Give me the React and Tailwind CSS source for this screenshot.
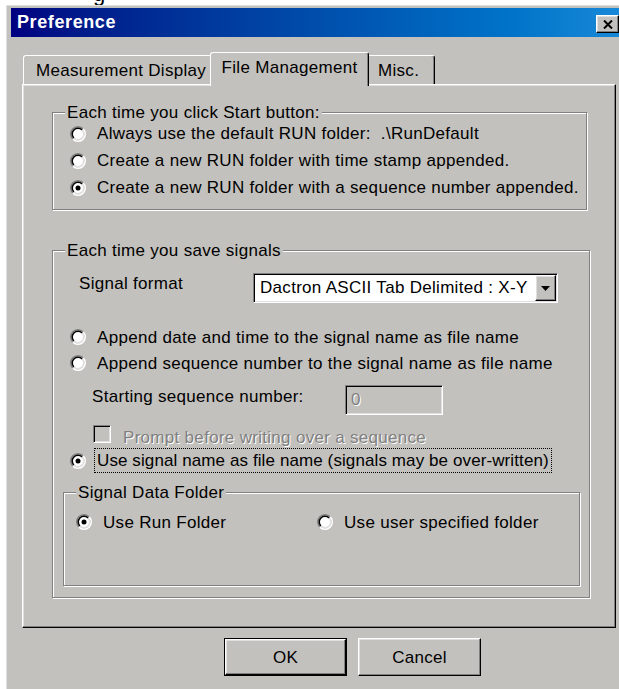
import React from "react";

// classic 3D edges
const raised =
  "border border-t-white border-l-white border-r-black border-b-black shadow-[inset_-1px_-1px_0_#808080,inset_1px_1px_0_#dfdfdf]";
const sunken =
  "border border-t-[#808080] border-l-[#808080] border-r-white border-b-white shadow-[inset_1px_1px_0_#000,inset_-1px_-1px_0_#dfdfdf]";
const etched = "border border-[#808080] shadow-[inset_1px_1px_0_#fff,1px_1px_0_#fff]";
const disabledText = "text-[#808080] [text-shadow:1px_1px_0_#fff]";

function Radio({ checked }) {
  return (
    <svg width="16" height="16" viewBox="0 0 16 16" className="shrink-0">
      <circle cx="8" cy="8" r="6" fill="#fff" />
      <path d="M13.13 2.87 A7.25 7.25 0 0 0 2.87 13.13" fill="none" stroke="#808080" strokeWidth="1.5" />
      <path d="M2.87 13.13 A7.25 7.25 0 0 0 13.13 2.87" fill="none" stroke="#fff" strokeWidth="1.5" />
      <path d="M12.07 3.93 A5.75 5.75 0 0 0 3.93 12.07" fill="none" stroke="#000" strokeWidth="1.5" />
      <path d="M3.93 12.07 A5.75 5.75 0 0 0 12.07 3.93" fill="none" stroke="#dfdfdf" strokeWidth="1.5" />
      {checked && <circle cx="8" cy="8" r="2.5" fill="#000" />}
    </svg>
  );
}

function Option({ checked, focused, className = "", children }) {
  return (
    <div className={`flex items-center gap-[8px] ${className}`}>
      <Radio checked={checked} />
      <span
        className={`border border-dotted px-[2px] leading-[23px] whitespace-nowrap ${
          focused ? "border-black tracking-[0.1px]" : "border-transparent"
        }`}
      >
        {children}
      </span>
    </div>
  );
}

function Group({ title, className = "", children }) {
  return (
    <div className={`${etched} ${className}`}>
      <div className="-mt-[10px] ml-[12px] h-[19px] w-fit bg-[#c3c1bd] px-[2px] leading-[19px]">{title}</div>
      {children}
    </div>
  );
}

function Button({ isDefault, children }) {
  return (
    <div className={`h-[38px] w-[123px] ${isDefault ? "border border-black" : ""}`}>
      <button className={`flex h-full w-full items-center justify-center ${raised} bg-[#c3c1bd] leading-[19px]`}>
        {children}
      </button>
    </div>
  );
}

export default function App() {
  return (
    <div className="h-[689px] w-[619px] overflow-hidden bg-white font-['Liberation_Sans',Arial,sans-serif] text-[17px] tracking-[0.3px] text-black">
      <div className="h-[5px] overflow-hidden pl-[93px]">
        <div className="-mt-[17px] text-[22px] leading-[22px]">g</div>
      </div>

      <div className="ml-[6px] h-[700px] w-[624px] border-l border-t border-[#dfdfdf] bg-[#c3c1bd] pl-[4px] pt-[2px]">
        {/* caption */}
        <div className="flex h-[29px] w-[610px] items-start justify-between bg-linear-to-r from-[#000080] to-[#1889d8] pl-[6px] pr-[2px]">
          <span className="mt-[4px] text-[18px] font-bold leading-[21px] tracking-[0.6px] text-white">Preference</span>
          <button className={`mt-[7px] flex h-[18px] w-[23px] items-center justify-center bg-[#c3c1bd] ${raised}`}>
            <svg width="10" height="9" viewBox="0 0 10 9">
              <path d="M1 0.5 L9 8.5 M9 0.5 L1 8.5" stroke="#000" strokeWidth="2" />
            </svg>
          </button>
        </div>

        {/* tabs */}
        <div className="ml-[12px] mt-[15px] flex items-end">
          <div className="mb-[2px] flex h-[29px] w-[189px] items-center rounded-t-[3px] border-l border-t border-r border-l-white border-t-white border-r-black pl-[12px] leading-[19px] whitespace-nowrap">
            Measurement Display
          </div>
          <div className="relative z-10 -ml-[2px] flex h-[34px] w-[159px] items-start justify-center rounded-t-[3px] border-l border-t border-r border-l-white border-t-white border-r-black bg-[#c3c1bd] pt-[5px] leading-[19px] whitespace-nowrap shadow-[inset_-1px_0_0_#808080]">
            File Management
          </div>
          <div className="mb-[2px] -ml-[2px] flex h-[29px] w-[68px] items-center rounded-t-[3px] border-l border-t border-r border-l-white border-t-white border-r-black pl-[10px] leading-[19px] shadow-[inset_-1px_0_0_#808080]">
            Misc.
          </div>
        </div>

        {/* tab page */}
        <div className="relative -mt-[2px] ml-[11px] h-[544px] w-[594px] border border-t-white border-l-white border-r-black border-b-black bg-[#c3c1bd] pt-[27px] shadow-[inset_-1px_-1px_0_#808080,inset_1px_1px_0_#dfdfdf]">
          <Group title="Each time you click Start button:" className="ml-[29px] h-[98px] w-[535px]">
            <div className="-mt-[2px] flex flex-col pl-[17px]">
              <Option className="h-[27px]">{"Always use the default RUN folder:\u00a0 .\\RunDefault"}</Option>
              <Option className="h-[27px]">Create a new RUN folder with time stamp appended.</Option>
              <Option className="h-[27px]" checked>
                Create a new RUN folder with a sequence number appended.
              </Option>
            </div>
          </Group>

          <Group title="Each time you save signals" className="ml-[29px] mt-[40px] h-[348px] w-[538px]">
            <div className="mt-[13px] flex h-[30px] pl-[26px]">
              <div className="w-[174px] pt-[1px] leading-[19px]">Signal format</div>
              <div className={`flex h-[30px] w-[305px] bg-white p-[1px] ${sunken}`}>
                <div className="flex-1 overflow-hidden pl-[5px] leading-[26px] whitespace-nowrap">
                  Dactron ASCII Tab Delimited : X-Y
                </div>
                <div className={`flex h-[26px] w-[21px] shrink-0 items-center justify-center bg-[#c3c1bd] ${raised}`}>
                  <svg width="9" height="5" viewBox="0 0 9 5">
                    <path d="M0 0 H9 L4.5 5 Z" fill="#000" />
                  </svg>
                </div>
              </div>
            </div>

            <div className="mt-[21px] pl-[17px]">
              <Option className="h-[26px]">Append date and time to the signal name as file name</Option>
              <Option className="h-[26px]">Append sequence number to the signal name as file name</Option>
            </div>

            <div className="mt-[9px] flex h-[30px] pl-[39px]">
              <div className="w-[253px] pt-[2px] leading-[19px] whitespace-nowrap">Starting sequence number:</div>
              <div className={`h-[30px] w-[98px] p-[1px] pl-[5px] leading-[26px] ${sunken} ${disabledText}`}>0</div>
            </div>

            <div className="mt-[10px] flex h-[18px] items-start gap-[12px] pl-[40px]">
              <div className={`h-[18px] w-[18px] shrink-0 ${sunken}`} />
              <span className={`pt-[3px] leading-[19px] whitespace-nowrap ${disabledText}`}>
                Prompt before writing over a sequence
              </span>
            </div>

            <div className="mt-[5px] pl-[17px]">
              <Option checked focused>
                Use signal name as file name (signals may be over-written)
              </Option>
            </div>

            <Group title="Signal Data Folder" className="ml-[10px] mt-[19px] h-[94px] w-[517px]">
              <div className="mt-[8px] flex h-[24px] pl-[12px]">
                <Option className="w-[241px] shrink-0" checked>
                  Use Run Folder
                </Option>
                <Option>Use user specified folder</Option>
              </div>
            </Group>
          </Group>
        </div>

        {/* dialog buttons */}
        <div className="ml-[213px] mt-[10px] flex gap-[11px]">
          <Button isDefault>OK</Button>
          <Button>Cancel</Button>
        </div>
      </div>
    </div>
  );
}
